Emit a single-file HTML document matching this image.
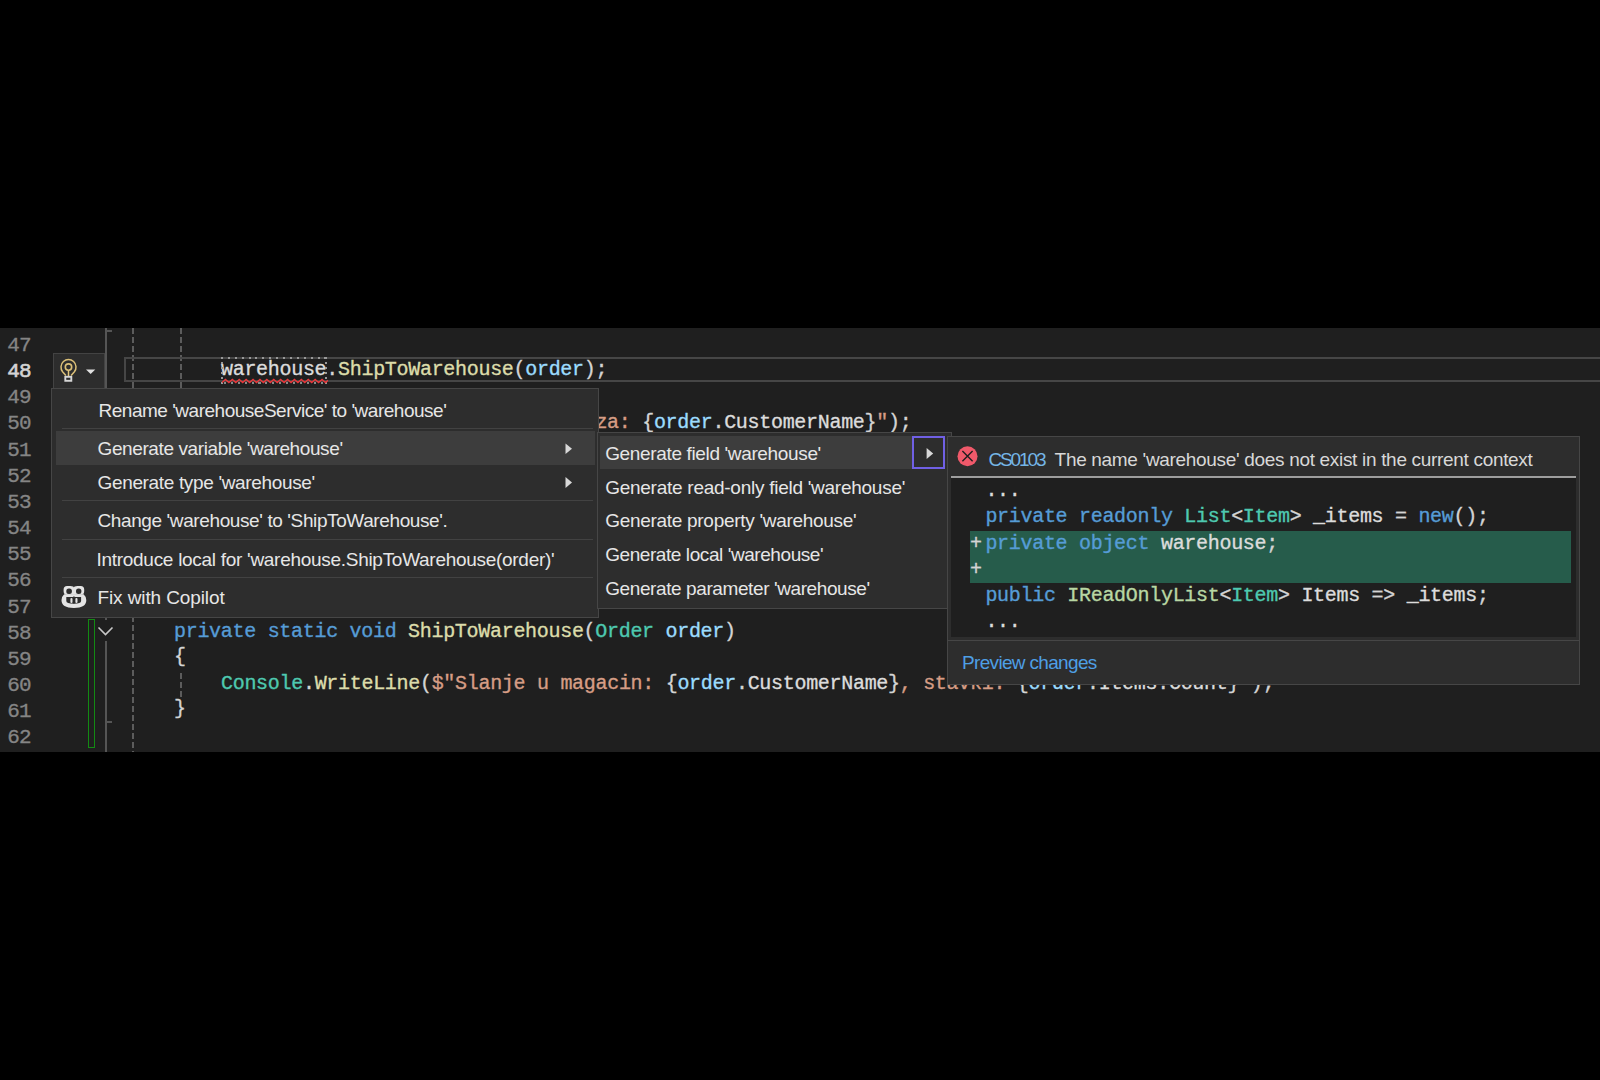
<!DOCTYPE html>
<html><head><meta charset="utf-8">
<style>
html,body{margin:0;padding:0;}
body{width:1600px;height:1080px;background:#000;position:relative;overflow:hidden;}
.abs{position:absolute;}
#ed{position:absolute;left:0;top:328px;width:1600px;height:424px;background:#1f1f1f;overflow:hidden;}
.mono{font-family:"Liberation Mono",monospace;font-size:20px;line-height:26.2px;letter-spacing:-0.3px;white-space:pre;position:absolute;-webkit-text-stroke:0.35px currentColor;}
.ln{font-family:"Liberation Mono",monospace;font-size:21px;line-height:26.2px;letter-spacing:-0.9px;white-space:pre;position:absolute;left:0.7px;margin-top:1.8px;width:30px;text-align:right;color:#858585;-webkit-text-stroke:0.3px currentColor;}
.sans{font-family:"Liberation Sans",sans-serif;font-size:19px;line-height:20px;white-space:pre;position:absolute;color:#e6e6e6;}
.dash{background:repeating-linear-gradient(to bottom,#5c5c5c 0 6px,transparent 6px 9px);}
.k{color:#569cd6}.t{color:#4ec9b0}.m{color:#dcdcaa}.p{color:#9cdcfe}.s{color:#d69d85}.w{color:#dcdcdc}.i{color:#b8d7a3}.o{color:#d4d4d4}
</style></head><body>
<div id="ed">
  <!-- line numbers: row top (editor coords) = 29.4 + (N-48)*26.2 -->
  <div class="ln" style="top:3.25px">47</div>
  <div class="ln" style="top:29.4px;color:#d4d4d4;-webkit-text-stroke:0.6px #d4d4d4">48</div>
  <div class="ln" style="top:55.55px">49</div>
  <div class="ln" style="top:81.7px">50</div>
  <div class="ln" style="top:107.85px">51</div>
  <div class="ln" style="top:134.0px">52</div>
  <div class="ln" style="top:160.15px">53</div>
  <div class="ln" style="top:186.3px">54</div>
  <div class="ln" style="top:212.45px">55</div>
  <div class="ln" style="top:238.6px">56</div>
  <div class="ln" style="top:264.75px">57</div>
  <div class="ln" style="top:290.9px">58</div>
  <div class="ln" style="top:317.05px">59</div>
  <div class="ln" style="top:343.2px">60</div>
  <div class="ln" style="top:369.35px">61</div>
  <div class="ln" style="top:395.5px">62</div>


  <!-- indent guides -->
  <div class="abs dash" style="left:132px;top:0;width:2px;height:424px;"></div>
  <div class="abs dash" style="left:180px;top:0;width:2px;height:60px;"></div>
  <div class="abs dash" style="left:180px;top:345px;width:2px;height:24px;"></div>
  <!-- outline margin -->
  <div class="abs" style="left:105px;top:0;width:2px;height:60px;background:#555"></div>
  <div class="abs" style="left:105px;top:2px;width:7px;height:2px;background:#555"></div>
  <div class="abs" style="left:105px;top:289px;width:2px;height:3px;background:#555"></div>
  <div class="abs" style="left:105px;top:313px;width:2px;height:111px;background:#555"></div>
  <div class="abs" style="left:105px;top:393px;width:7px;height:2px;background:#555"></div>
  <!-- chevron -->
  <svg class="abs" style="left:97px;top:298px" width="17" height="11" viewBox="0 0 17 11"><path d="M1.5 1.5 L8.5 8.5 L15.5 1.5" fill="none" stroke="#c8c8c8" stroke-width="1.6"/></svg>
  <!-- green change bar -->
  <div class="abs" style="left:87.5px;top:290.5px;width:5px;height:127px;border:1.5px solid #138a13;"></div>
  <!-- current line box -->
  <div class="abs" style="left:124px;top:29px;width:1480px;height:21px;border:2px solid #464646;"></div>

  <!-- code -->
  <div class="mono o" style="left:221px;top:29.4px"><span class="w">warehouse</span>.<span class="m">ShipToWarehouse</span>(<span class="p">order</span>);</div>
  <div class="mono o" style="left:595.4px;top:81.7px"><span class="s">za: </span>{<span class="p">order</span>.<span class="w">CustomerName</span>}<span class="s">"</span>);</div>
  <div class="mono o" style="left:174px;top:290.9px"><span class="k">private</span> <span class="k">static</span> <span class="k">void</span> <span class="m">ShipToWarehouse</span>(<span class="t">Order</span> <span class="p">order</span>)</div>
  <div class="mono o" style="left:174px;top:315.5px">{</div>
  <div class="mono o" style="left:221px;top:343.2px"><span class="t">Console</span>.<span class="m">WriteLine</span>(<span class="s">$"Slanje u magacin: </span>{<span class="p">order</span>.<span class="w">CustomerName</span>}<span class="s">, stavki: </span>{<span class="p">order</span>.<span class="w">Items</span>.<span class="w">Count</span>}<span class="s">"</span>);</div>
  <div class="mono o" style="left:174px;top:367.8px">}</div>
</div>

<!-- dotted marker + squiggle (page coords) -->
<div class="abs" style="left:221px;top:357px;width:106px;height:2px;background:repeating-linear-gradient(to right,#9a9a9a 0 2px,transparent 2px 6.9px);"></div>
<div class="abs" style="left:224px;top:382px;width:103px;height:2px;background:repeating-linear-gradient(to right,#8a8a8a 0 2px,transparent 2px 6.9px);"></div>
<div class="abs" style="left:221px;top:357px;width:2px;height:27px;background:repeating-linear-gradient(to bottom,#9a9a9a 0 2px,transparent 2px 5px);"></div>
<div class="abs" style="left:325px;top:357px;width:2px;height:27px;background:repeating-linear-gradient(to bottom,#9a9a9a 0 2px,transparent 2px 5px);"></div>
<svg class="abs" style="left:222px;top:378px" width="106" height="7" viewBox="0 0 106 7"><path d="M0 4.5 L3.45 1.5 L6.9 4.5 L10.35 1.5 L13.8 4.5 L17.25 1.5 L20.7 4.5 L24.15 1.5 L27.6 4.5 L31.05 1.5 L34.5 4.5 L37.95 1.5 L41.4 4.5 L44.85 1.5 L48.3 4.5 L51.75 1.5 L55.2 4.5 L58.65 1.5 L62.1 4.5 L65.55 1.5 L69 4.5 L72.45 1.5 L75.9 4.5 L79.35 1.5 L82.8 4.5 L86.25 1.5 L89.7 4.5 L93.15 1.5 L96.6 4.5 L100.05 1.5 L103.5 4.5 L106 2.3" fill="none" stroke="#e8383b" stroke-width="1.4"/></svg>

<!-- lightbulb box -->
<div class="abs" style="left:53px;top:353px;width:50px;height:36px;background:#2d2d2d;border:1.5px solid #434343;border-bottom:none;"></div>
<svg class="abs" style="left:53px;top:353px" width="52" height="36" viewBox="0 0 52 36">
  <path d="M12.9 22.4 L9.59 18.67 A7.5 7.5 0 1 1 21.41 18.67 L18.1 22.4" fill="none" stroke="#dcc078" stroke-width="1.5"/>
  <circle cx="15.5" cy="14.05" r="3.2" fill="none" stroke="#dcc078" stroke-width="1.6"/>
  <path d="M15.5 17.2 L15.5 23" stroke="#e2c77e" stroke-width="1.5"/>
  <rect x="12.3" y="23.8" width="6" height="4" fill="none" stroke="#d6d6d6" stroke-width="1.9"/>
  <path d="M33 16.4 L42.3 16.4 L37.65 21 Z" fill="#e0e0e0"/>
</svg>

<!-- main menu -->
<div class="abs" style="left:51px;top:388px;width:546px;height:228px;background:#2d2d2d;border:1px solid #464646;"></div>
<div class="abs" style="left:62px;top:428px;width:531px;height:1px;background:#424242"></div>
<div class="abs" style="left:56px;top:431px;width:539px;height:34px;background:#3d3d3d"></div>
<div class="abs" style="left:62px;top:500px;width:531px;height:1px;background:#424242"></div>
<div class="abs" style="left:62px;top:539px;width:531px;height:1px;background:#424242"></div>
<div class="abs" style="left:62px;top:577px;width:531px;height:1px;background:#424242"></div>
<svg class="abs" style="left:560px;top:440px" width="16" height="50" viewBox="0 0 16 50"><path d="M5.5 3.5 L12 8.7 L5.5 14 Z" fill="#d8d8d8"/><path d="M5.5 37 L12 42.5 L5.5 48 Z" fill="#d8d8d8"/></svg>
<div class="sans" id="s1" style="left:98.5px;top:400.5px;letter-spacing:-0.487px;">Rename 'warehouseService' to 'warehouse'</div>
<div class="sans" id="s2" style="left:97.5px;top:438.5px;letter-spacing:-0.393px;">Generate variable 'warehouse'</div>
<div class="sans" id="s3" style="left:97.5px;top:472.5px;letter-spacing:-0.342px;">Generate type 'warehouse'</div>
<div class="sans" id="s4" style="left:97.5px;top:511.1px;letter-spacing:-0.39px;">Change 'warehouse' to 'ShipToWarehouse'.</div>
<div class="sans" id="s5" style="left:96.5px;top:549.5px;letter-spacing:-0.287px;">Introduce local for 'warehouse.ShipToWarehouse(order)'</div>
<div class="sans" id="s6" style="left:97.5px;top:587.9px;letter-spacing:-0.107px;">Fix with Copilot</div>
<svg class="abs" style="left:55px;top:580px" width="40" height="32" viewBox="0 0 40 32">
  <path fill="#e4e4e4" fill-rule="evenodd" d="M9.2 14.2 Q6.5 16.5 6.5 20.2 Q6.5 27.9 18.9 27.9 Q31.3 27.9 31.3 20.2 Q31.3 16.5 28.6 14.2 Z M11.3 16.9 H26.1 V21 Q26.1 23.7 18.9 23.7 Q11.3 23.7 11.3 21 Z"/>
  <path fill="#e4e4e4" fill-rule="evenodd" d="M12.1 5.9 H15.5 Q18.9 5.9 18.9 7.5 Q18.9 5.9 22.3 5.9 H25.7 Q29.2 5.9 29.2 9.4 V11.3 Q29.2 14.8 25.7 14.8 H12.1 Q8.6 14.8 8.6 11.3 V9.4 Q8.6 5.9 12.1 5.9 Z M13.8 8.6 H14.4 Q16.9 8.6 16.9 11.1 V11.4 Q16.9 13.9 14.4 13.9 H13.8 Q11.3 13.9 11.3 11.4 V11.1 Q11.3 8.6 13.8 8.6 Z M23.5 8.6 H23.9 Q26.4 8.6 26.4 11.1 V11.4 Q26.4 13.9 23.9 13.9 H23.5 Q21 13.9 21 11.4 V11.1 Q21 8.6 23.5 8.6 Z"/>
  <rect x="18" y="14.8" width="1.8" height="2.3" fill="#e4e4e4"/>
  <rect x="18.5" y="16.2" width="0.9" height="7.4" fill="#2a2a2a"/>
  <rect x="15.4" y="18" width="2.1" height="5" rx="1" fill="#e4e4e4"/>
  <rect x="20.4" y="18" width="2.1" height="5" rx="1" fill="#e4e4e4"/>
</svg>

<!-- submenu -->
<div class="abs" style="left:597px;top:432px;width:353px;height:175px;background:#2d2d2d;border:1px solid #464646;"></div>
<div class="abs" style="left:599.5px;top:435.5px;width:313px;height:33.5px;background:#3d3d3d"></div>
<div class="abs" style="left:912px;top:436px;width:29px;height:29px;border:2px solid #7060e4;background:#2d2d2d"></div>
<svg class="abs" style="left:920px;top:444px" width="16" height="18" viewBox="0 0 16 18"><path d="M6.6 4 L13.2 9.4 L6.6 15 Z" fill="#d8d8d8"/></svg>
<div class="sans" id="s7" style="left:605.2px;top:443.5px;letter-spacing:-0.352px;">Generate field 'warehouse'</div>
<div class="sans" id="s8" style="left:605.2px;top:477.5px;letter-spacing:-0.263px;">Generate read-only field 'warehouse'</div>
<div class="sans" id="s9" style="left:605.2px;top:511.0px;letter-spacing:-0.293px;">Generate property 'warehouse'</div>
<div class="sans" id="s10" style="left:605.2px;top:545.0px;letter-spacing:-0.424px;">Generate local 'warehouse'</div>
<div class="sans" id="s11" style="left:605.2px;top:579.0px;letter-spacing:-0.4px;">Generate parameter 'warehouse'</div>

<!-- preview pane -->
<div class="abs" style="left:947px;top:436px;width:631px;height:246.5px;background:#2d2d2d;border:1px solid #464646;"></div>
<div class="abs" style="left:951px;top:475.5px;width:625px;height:2px;background:#9e9e9e"></div>
<div class="abs" style="left:951px;top:477.5px;width:625px;height:159px;background:#1f1f1f;overflow:hidden">
  <div class="abs" style="left:18.7px;top:53px;width:601.3px;height:52.4px;background:#265c4b"></div>
  <div class="mono w" style="left:34.4px;top:0.6px">...</div>
  <div class="mono o" style="left:34.4px;top:26.8px"><span class="k">private</span> <span class="k">readonly</span> <span class="t">List</span>&lt;<span class="t">Item</span>&gt; <span class="w">_items</span> = <span class="k">new</span>();</div>
  <div class="mono o" style="left:34.4px;top:53px"><span class="k">private</span> <span class="k">object</span> <span class="w">warehouse</span>;</div>
  <div class="mono o" style="left:19px;top:53px">+</div>
  <div class="mono o" style="left:19px;top:79.2px">+</div>
  <div class="mono o" style="left:34.4px;top:105.4px"><span class="k">public</span> <span class="i">IReadOnlyList</span>&lt;<span class="t">Item</span>&gt; <span class="w">Items</span> =&gt; <span class="w">_items</span>;</div>
  <div class="mono w" style="left:34.4px;top:131.6px">...</div>
</div>
<div class="abs" style="left:948px;top:640px;width:631px;height:1px;background:#464646"></div>
<svg class="abs" style="left:957px;top:446px" width="22" height="22" viewBox="0 0 22 22"><circle cx="10.5" cy="10.2" r="10" fill="#f0596a"/><path d="M5.4 5.1 L15.6 15.3 M15.6 5.1 L5.4 15.3" stroke="#1e1e1e" stroke-width="1.35"/></svg>
<div class="sans" id="s12" style="left:988.4px;top:449.8px;letter-spacing:-2.12px;color:#75b6e7">CS0103</div>
<div class="sans" id="s13" style="left:1054.6px;top:449.8px;letter-spacing:-0.316px;color:#d8d8d8">The name 'warehouse' does not exist in the current context</div>
<div class="sans" id="s14" style="left:962px;top:652.5px;letter-spacing:-0.671px;color:#4e9fe5">Preview changes</div>
</body></html>
